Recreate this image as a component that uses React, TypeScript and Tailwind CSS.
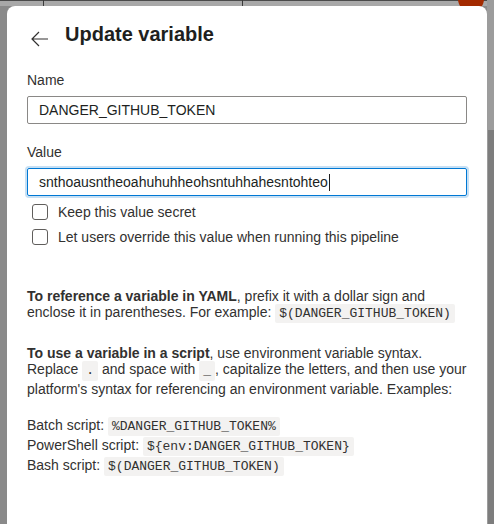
import React from 'react';

const font = { fontFamily: '"Liberation Sans", Arial, sans-serif' };

function Code({ children, block }: { children: React.ReactNode; block?: boolean }) {
  return (
    <code
      className={
        block
          ? "inline-block rounded-[2px] bg-[#f3f2f1] px-[4px] py-[2px] align-top font-['Liberation_Mono',monospace] text-[13px] leading-[16px] text-[#323130]"
          : "rounded-[2px] bg-[#f3f2f1] px-[4px] py-[2px] font-['Liberation_Mono',monospace] text-[13px] leading-[14px] text-[#323130]"
      }
    >
      {children}
    </code>
  );
}

function Checkbox({ label }: { label: string }) {
  return (
    <label className="flex h-[20px] items-center gap-[10px] text-[14px] text-[#323130]">
      <span className="h-[16px] w-[16px] rounded-[3px] border border-[#605e5c] bg-white" />
      {label}
    </label>
  );
}

export default function App() {
  const name = 'DANGER_GITHUB_TOKEN';
  return (
    <div className="relative h-[524px] w-[494px] overflow-hidden bg-[#8a8a8a]" style={font}>
      {/* dimmed page behind the dialog */}
      <div className="absolute left-0 top-0 h-[6px] w-full border-t border-[#4a4a4a] bg-[#a8a8a8]" />
      <div className="absolute left-[43px] top-0 h-[6px] w-px bg-[#3a3a3a]" />
      <div className="absolute left-[242px] top-0 h-[6px] w-px bg-[#3a3a3a]" />
      <div className="absolute left-[458px] top-[-14px] h-[26px] w-[26px] rounded-full border-t-2 border-[#3fa9d9] bg-[#a32a00]" />
      <div className="absolute right-0 top-0 h-full w-[7px] bg-[#9c9c9c]" />
      <div className="absolute right-0 top-[130px] h-full w-[6px] bg-[#7d7d7d]" />

      <div className="relative ml-[7px] mt-[6px] h-[560px] w-[480px] rounded-t-[8px] bg-white px-[20px] pt-[14px]">
        <div className="flex h-[28px] items-center gap-[14px]">
          <svg width="22" height="22" viewBox="0 0 22 22" className="ml-[2px] mt-[10px]" fill="none" stroke="#323130" strokeWidth="1.2">
            <path d="M19 11H3M10 4 3 11l7 7" />
          </svg>
          <h1 className="text-[20px] font-bold leading-[28px] text-[#201f1e]">Update variable</h1>
        </div>

        <div className="mt-[22px] text-[14px] leading-[20px] text-[#323130]">Name</div>
        <div className="mt-[6px] flex h-[28px] items-center rounded-[2px] border border-[#8a8886] px-[11px] text-[14px] text-[#201f1e]">
          {name}
        </div>

        <div className="mt-[18px] text-[14px] leading-[20px] text-[#323130]">Value</div>
        <div className="mt-[6px] flex h-[28px] items-center rounded-[2px] border border-[#0078d4] px-[11px] text-[14px] text-[#201f1e] shadow-[0_0_0_2px_#c7e0f4]">
          snthoausntheoahuhuhheohsntuhhahesntohteo
          <span className="ml-px h-[17px] w-px bg-[#201f1e]" />
        </div>

        <div className="mt-[6px] flex flex-col gap-[5px] pl-[5px]">
          <Checkbox label="Keep this value secret" />
          <Checkbox label="Let users override this value when running this pipeline" />
        </div>

        <div className="mt-[41px] text-[14px] leading-[16px] text-[#323130]">
          <p>
            <b>To reference a variable in YAML</b>, prefix it with a dollar sign and enclose it in parentheses. For
            example: <Code>$({name})</Code>
          </p>
          <p className="mt-[24px]">
            <b>To use a variable in a script</b>, use environment variable syntax. Replace <Code block>.</Code> and
            space with <Code block>_</Code>, capitalize the letters, and then use your platform's syntax for
            referencing an environment variable. Examples:
          </p>
          <div className="mt-[18px] flex flex-col leading-[20px]">
            <div>
              Batch script: <Code>%{name}%</Code>
            </div>
            <div>
              PowerShell script: <Code>{'${env:' + name + '}'}</Code>
            </div>
            <div>
              Bash script: <Code>$({name})</Code>
            </div>
          </div>
        </div>
      </div>
    </div>
  );
}
